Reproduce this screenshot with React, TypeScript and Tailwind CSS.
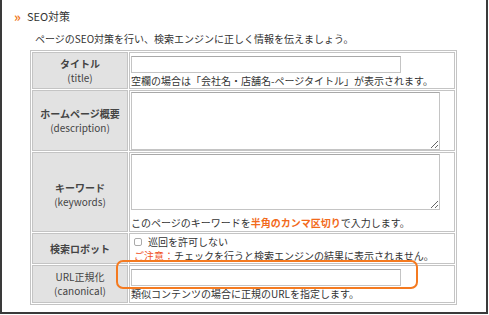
import React from 'react';

const jp = { fontFamily: '"Noto Sans CJK JP", "Noto Sans", sans-serif' };

const Label: React.FC<{ jp: string; en: string; bold?: boolean }> = ({ jp: ja, en, bold = true }) => (
  <div className="flex flex-col items-center justify-center leading-[14px] text-[10px] text-[#444]">
    <span className={bold ? 'font-bold' : ''}>{ja}</span>
    <span>{en}</span>
  </div>
);

const TextBox: React.FC<{ w: string }> = ({ w }) => (
  <input
    readOnly
    className={`${w} h-[17px] border border-[#c4c4c4] border-t-[#a8a8a8] bg-white outline-none`}
  />
);

const App: React.FC = () => {
  return (
    <div className="relative w-[489px] h-[315px] bg-white" style={jp}>
      <div className="w-[488px] h-[314px] border-l-2 border-r-2 border-b-2 border-[#3a3a3a] text-[#333]">
        {/* Section title */}
        <div className="flex items-center pt-[8px] pl-[12px] h-[24px]">
          <span className="text-[#f07820] font-bold text-[13px] leading-none mr-[6px]">»</span>
          <span className="text-[11px] leading-none">SEO対策</span>
        </div>

        <p className="pl-[33px] mt-[8px] text-[10px] leading-[14px]">
          ページのSEO対策を行い、検索エンジンに正しく情報を伝えましょう。
        </p>

        {/* Settings table */}
        <div className="ml-[28px] mt-[4px] w-[427px] border border-[#c4c4c4] p-px">
          <div className="grid grid-cols-[96px_1fr] gap-px bg-white text-[10px]">
            {/* title */}
            <div className="h-[37px] bg-[#e2e2e2] border border-[#c4c4c4]">
              <div className="h-full flex items-center justify-center">
                <Label jp="タイトル" en="(title)" />
              </div>
            </div>
            <div className="h-[37px] border border-[#c4c4c4] pl-px pt-[3px]">
              <TextBox w="w-[270px]" />
              <p className="leading-[14px] mt-[1px]">空欄の場合は「会社名・店舗名-ページタイトル」が表示されます。</p>
            </div>

            {/* description */}
            <div className="h-[61px] bg-[#e2e2e2] border border-[#c4c4c4] flex items-center justify-center">
              <Label jp="ホームページ概要" en="(description)" />
            </div>
            <div className="h-[61px] border border-[#c4c4c4] pl-px pt-px">
              <textarea
                readOnly
                className="block w-[309px] h-[58px] border border-[#c4c4c4] border-t-[#a8a8a8] bg-white outline-none"
              />
            </div>

            {/* keywords */}
            <div className="h-[80px] bg-[#e2e2e2] border border-[#c4c4c4] flex items-center justify-center pt-[6px]">
              <Label jp="キーワード" en="(keywords)" />
            </div>
            <div className="h-[80px] border border-[#c4c4c4] pl-px pt-px">
              <textarea
                readOnly
                className="block w-[309px] h-[56px] border border-[#c4c4c4] border-t-[#a8a8a8] bg-white outline-none"
              />
              <p className="leading-[14px] mt-[6px]">
                このページのキーワードを
                <span className="text-[#f26a1b] font-bold">半角のカンマ区切り</span>
                で入力します。
              </p>
            </div>

            {/* robots */}
            <div className="h-[31px] bg-[#e2e2e2] border border-[#c4c4c4] flex items-center justify-center">
              <span className="text-[10px] text-[#444] font-semibold">検索ロボット</span>
            </div>
            <div className="h-[31px] border border-[#c4c4c4] pl-[4px] pt-px leading-[14px]">
              <div className="flex items-center">
                <span className="inline-block w-[8px] h-[8px] rounded-[2px] border border-[#aaa] bg-white mr-[6px]" />
                <span>巡回を許可しない</span>
              </div>
              <p>
                <span className="text-[#f0501e]">ご注意：</span>
                チェックを行うと検索エンジンの結果に表示されません。
              </p>
            </div>

            {/* canonical */}
            <div className="h-[38px] bg-[#e2e2e2] border border-[#c4c4c4] flex items-center justify-center">
              <Label jp="URL正規化" en="(canonical)" bold={false} />
            </div>
            <div className="h-[38px] border border-[#c4c4c4] pl-px pt-[3px]">
              <TextBox w="w-[270px]" />
              <p className="leading-[14px] mt-[1px]">類似コンテンツの場合に正規のURLを指定します。</p>
            </div>
          </div>
        </div>
      </div>

      {/* highlight around canonical field */}
      <div className="absolute left-[116px] top-[260px] w-[302px] h-[29px] border-2 border-[#f47a20] rounded-[7px] pointer-events-none" />
    </div>
  );
};

export default App;
